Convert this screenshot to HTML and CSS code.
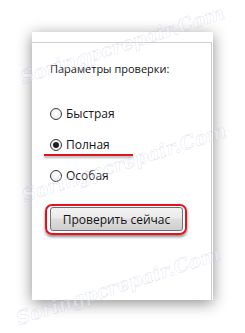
FILE: index.html
```html
<!DOCTYPE html>
<html lang="ru">
<head>
    <meta charset="UTF-8">
    <title>Параметры проверки</title>
    <link rel="stylesheet" href="styles.css">
</head>
<body>
    <div class="panel">
        <div class="panel-inner">
            <p class="title">Параметры проверки:</p>

            <!-- Варианты проверки -->
            <div class="options">
                <label class="option"><input type="radio" name="mode"> Быстрая</label>
                <label class="option marked"><input type="radio" name="mode" checked> Полная</label>
                <label class="option"><input type="radio" name="mode"> Особая</label>
            </div>

            <div class="ring">
                <button type="button" class="check-btn">Проверить сейчас</button>
            </div>
        </div>
    </div>

    <!-- Водяной знак -->
    <span class="mark mark-1">Soringpcrepair.Com</span>
    <span class="mark mark-2">Soringpcrepair.Com</span>
    <span class="mark mark-3">Soringpcrepair.Com</span>
</body>
</html>
```

FILE: styles.css
```css
body {
    margin: 0;
    background-color: #ffffff;
    font-family: "Open Sans", "Noto Sans", sans-serif;
    color: #141414;
    font-size: 11px;
    width: 245px;
    height: 333px;
    overflow: hidden;
    position: relative;
}

.panel {
    margin: 32px 0 0 32px;
    width: 181px;
    height: 268px;
    padding: 10px 1px 0 0;
    box-sizing: border-box;
    background-color: #ffffff;
    box-shadow: 0 3px 14px rgba(0, 0, 0, 0.45);
}

.panel-inner {
    height: 100%;
    border-top: 1px solid #cfcfcf;
    border-right: 1px solid #cfcfcf;
    padding: 18px 0 0 18px;
    box-sizing: border-box;
}

.title {
    margin: 0;
    line-height: 16px;
}

.options {
    display: flex;
    flex-direction: column;
    gap: 15px;
    margin-top: 29px;
}

.option {
    display: flex;
    align-items: center;
    gap: 4px;
    line-height: 16px;
    font-size: 12px;
    position: relative;
}

.option input {
    -webkit-appearance: none;
    appearance: none;
    margin: 0;
    width: 12px;
    height: 12px;
    border: 1px solid #3a3a3a;
    border-radius: 50%;
    background: radial-gradient(circle at 50% 40%, #ffffff, #e6e6e6);
    box-sizing: border-box;
    display: grid;
    place-items: center;
}

.option input:checked::before {
    content: "";
    width: 6px;
    height: 6px;
    border-radius: 50%;
    background-color: #1e1e1e;
}

/* красная черта под выбранным пунктом */
.marked::after {
    content: "";
    position: absolute;
    left: -6px;
    top: 17px;
    width: 89px;
    height: 2px;
    background-color: #e0141e;
    box-shadow: 0 2px 2px rgba(0, 0, 0, 0.3);
}

.ring {
    margin: 20px 0 0 -5px;
    width: 142px;
    height: 31px;
    border: 2px solid #e8101c;
    border-radius: 7px;
    padding: 1px 2px 0 3px;
    box-sizing: border-box;
    box-shadow: 0 2px 3px rgba(0, 0, 0, 0.45);
}

.check-btn {
    width: 133px;
    height: 24px;
    border: 1px solid #707070;
    border-radius: 3px;
    background: linear-gradient(#f2f2f2, #ebebeb 45%, #dddddd 50%, #cfcfcf);
    font-family: "Open Sans", "Noto Sans", sans-serif;
    font-size: 12px;
    color: #141414;
    padding: 0;
}

.mark {
    position: absolute;
    font-family: "DejaVu Serif", serif;
    font-style: italic;
    font-weight: bold;
    font-size: 19px;
    color: rgba(255, 255, 255, 0.3);
    -webkit-text-stroke: 0.5px rgba(130, 140, 205, 0.28);
    transform: rotate(-18deg);
    transform-origin: left bottom;
    white-space: nowrap;
}

.mark-1 { left: 24px; top: 66px; }
.mark-2 { left: 26px; top: 184px; }
.mark-3 { left: 20px; top: 307px; }
```
